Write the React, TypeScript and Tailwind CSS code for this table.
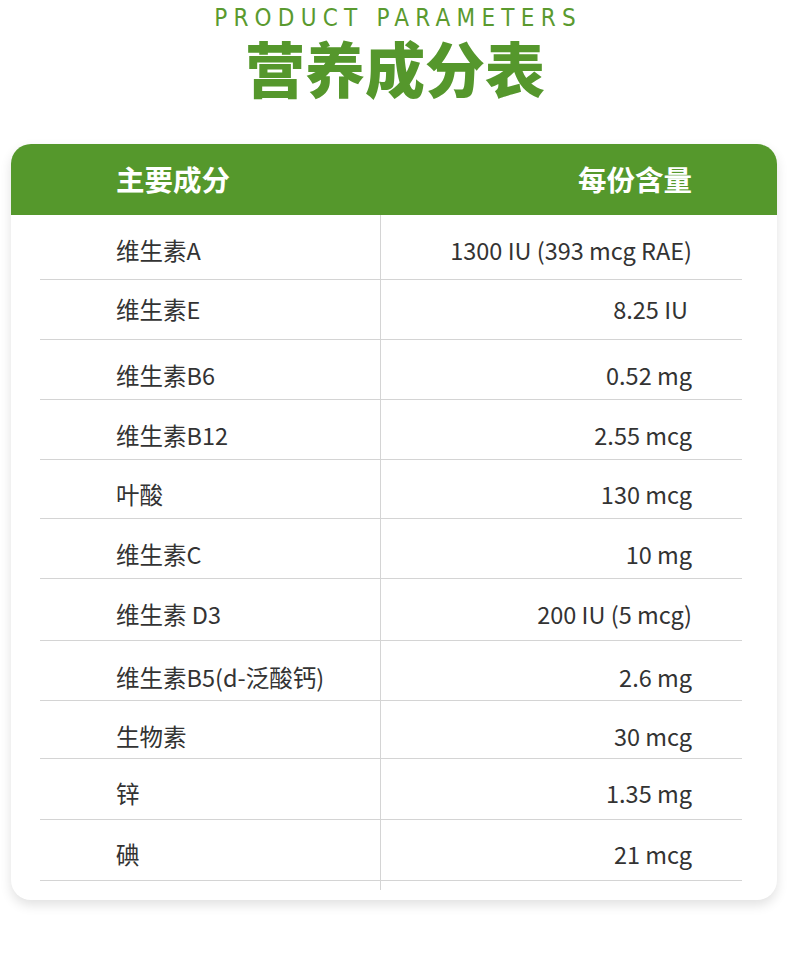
const rows = [
  { name: "维生素A", amount: "1300 IU (393 mcg RAE)", h: "h-[65px]", pt: "pt-[8px]" },
  { name: "维生素E", amount: "8.25 IU", h: "h-[60px]", pt: "pt-0", pr: "pr-[54px]" },
  { name: "维生素B6", amount: "0.52 mg", h: "h-[60px]", pt: "pt-[12px]" },
  { name: "维生素B12", amount: "2.55 mcg", h: "h-[60px]", pt: "pt-[12px]" },
  { name: "叶酸", amount: "130 mcg", h: "h-[59px]", pt: "pt-[12px]" },
  { name: "维生素C", amount: "10 mg", h: "h-[60px]", pt: "pt-[12px]" },
  { name: "维生素 D3", amount: "200 IU (5 mcg)", h: "h-[62px]", pt: "pt-[10px]" },
  { name: "维生素B5(d-泛酸钙)", amount: "2.6 mg", h: "h-[60px]", pt: "pt-[14px]" },
  { name: "生物素", amount: "30 mcg", h: "h-[58px]", pt: "pt-[14px]" },
  { name: "锌", amount: "1.35 mg", h: "h-[61px]", pt: "pt-[10px]" },
  { name: "碘", amount: "21 mcg", h: "h-[61px]", pt: "pt-[10px]" },
];

const App = () => {
  return (
    <div className="w-[790px] h-[968px] bg-white font-['Noto_Sans_CJK_SC',sans-serif] text-[#333333]">
      <div className="pt-[6px] flex flex-col items-center">
        <p className="font-['DejaVu_Sans_Condensed','Liberation_Sans',sans-serif] text-[24px] leading-[24px] tracking-[0.26em] text-[#5a9a2f] pl-[6px]">
          PRODUCT PARAMETERS
        </p>
        <h1 className="mt-[7px] text-[60px] leading-[60px] font-black text-[#55972c]">
          营养成分表
        </h1>
      </div>

      <div className="mt-[47px] mx-[11px] w-[766px] rounded-[20px] bg-white shadow-[0_5px_12px_rgba(0,0,0,0.12)] overflow-hidden">
        <div className="h-[71px] bg-[#55982c] flex items-center justify-between pl-[105px] pr-[85px] text-white text-[28.5px] font-bold">
          <span>主要成分</span>
          <span>每份含量</span>
        </div>

        <div className="flex pl-[29px] pr-[35px] pb-[10px]">
          <div className="w-[341px] border-r border-[#d4d4d4] pb-[9px]">
            {rows.map((r) => (
              <div
                key={r.name}
                className={`${r.h} ${r.pt} border-b border-[#d4d4d4] flex items-center pl-[76px] text-[23.5px]`}
              >
                {r.name}
              </div>
            ))}
          </div>
          <div className="flex-1">
            {rows.map((r) => (
              <div
                key={r.name}
                className={`${r.h} ${r.pt} ${r.pr ?? "pr-[50px]"} border-b border-[#d4d4d4] flex items-center justify-end text-[23.5px]`}
              >
                {r.amount}
              </div>
            ))}
          </div>
        </div>
      </div>
    </div>
  );
};

export default App;
